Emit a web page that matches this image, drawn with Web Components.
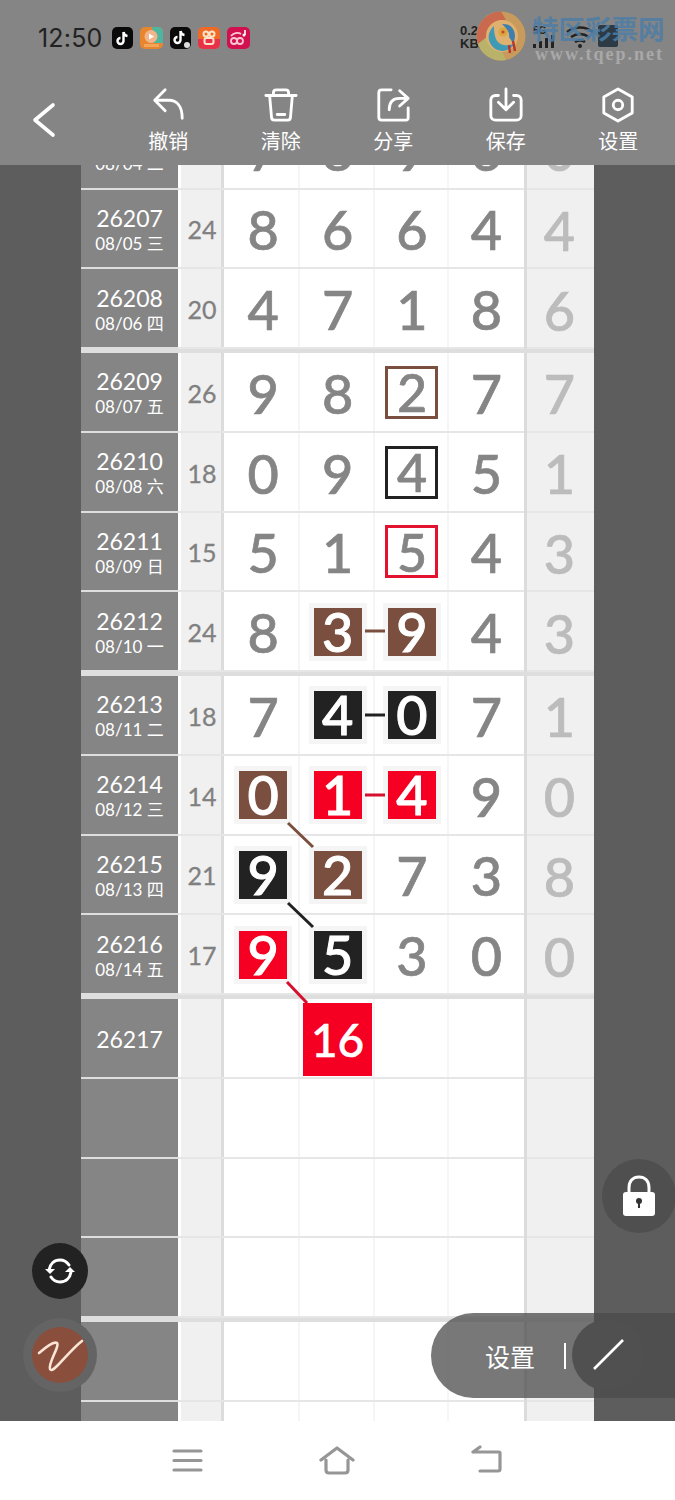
<!DOCTYPE html>
<html lang="zh">
<head>
<meta charset="utf-8">
<title>走势图</title>
<style>
  html, body { margin: 0; padding: 0; background: #5d5d5d; }
  body { font-family: Lato, "Noto Sans CJK SC", sans-serif; }
</style>
</head>
<body>
<trend-page></trend-page>

<script>
const CJK = 'Lato, "Noto Sans CJK SC", sans-serif'

class StatusBar extends HTMLElement {
  constructor() {
    super()
    this.attachShadow({ mode: "open" })
    this.shadowRoot.innerHTML = `
    <style>
      :host { display: flex; align-items: center; height: 76px; padding-left: 38px; position: relative; box-sizing: border-box; }
      .time { font: 400 25px Inter, sans-serif; color: #222; width: 74px; letter-spacing: .2px; }
      .apps { display: flex; gap: 7px; }
      .apps svg { display: block; }
      .net { position: absolute; left: 460px; top: 24px; font: 700 13px/13px "Liberation Sans", sans-serif; color: #222; width: 30px; }
      .mark { position: absolute; left: 476px; top: 10px; }
      .site { position: absolute; left: 532px; top: 12px; font: 700 26.5px/32px "Noto Sans CJK SC", sans-serif; color: #4d7da6; white-space: nowrap; opacity: .85; }
      .url { position: absolute; left: 535px; top: 43px; font: 700 18px/22px "Liberation Serif", serif; color: #a9a9a9; letter-spacing: 2px; white-space: nowrap; }
      .sys { position: absolute; left: 532px; top: 24px; }
    </style>
    <div class="time">12:50</div>
    <div class="apps">
      <svg width="21" height="22" viewBox="0 0 21 22"><rect width="21" height="22" rx="5" fill="#0a0a0a"/><path d="M11.500 5v9a3 3 0 1 1-3-3M11.500 5c.4 2.400 1.800 3.700 4 4" fill="none" stroke="#fff" stroke-width="2.400"/></svg>
      <svg width="23" height="22" viewBox="0 0 23 22"><rect width="23" height="22" rx="5" fill="#e8862f"/><path d="M12 0h6a5 5 0 0 1 5 5v11H14z" fill="#4eb5a0"/><circle cx="11" cy="9.500" r="6.500" fill="#f2b48a"/><path d="M9 6.500l5 3-5 3z" fill="#fff"/><rect x="4" y="17" width="15" height="3" fill="#f3a55a"/></svg>
      <svg width="21" height="22" viewBox="0 0 21 22"><rect width="21" height="22" rx="5" fill="#0a0a0a"/><path d="M10.500 4v9a3 3 0 1 1-3-3M10.500 4c.4 2.400 1.800 3.700 4 4" fill="none" stroke="#fff" stroke-width="2.400"/><circle cx="17" cy="18" r="3" fill="#ddd"/></svg>
      <svg width="22" height="22" viewBox="0 0 22 22"><rect width="22" height="22" rx="5" fill="#ee6a26"/><path d="M0 12h22v5a5 5 0 0 1-5 5H5a5 5 0 0 1-5-5z" fill="#e8324a"/><g fill="none" stroke="#fde3c8" stroke-width="2"><circle cx="8" cy="7" r="2.500"/><circle cx="14" cy="7" r="2.500"/><rect x="6.500" y="11" width="9" height="6" rx="2"/></g></svg>
      <svg width="23" height="22" viewBox="0 0 23 22"><rect width="23" height="22" rx="5" fill="#d20f4f"/><g fill="none" stroke="#fbc6d4" stroke-width="1.800"><circle cx="7" cy="14" r="3"/><circle cx="13" cy="14" r="3"/><path d="M4 9c2-3 7-4 10-2"/></g><path d="M18 3v5" stroke="#fff" stroke-width="1.600"/><circle cx="17" cy="8" r="1.500" fill="#fff"/></svg>
    </div>
    <div class="net">0.21<br>KB/s</div>
    <svg class="sys" width="90" height="30" viewBox="0 0 90 30">
      <text x="1" y="10" font-family="Liberation Sans" font-size="10" font-weight="700" fill="#222">5G</text>
      <g fill="#222"><rect x="1" y="20" width="3" height="4"/><rect x="7" y="17" width="3" height="7"/><rect x="13" y="14" width="3" height="10"/><rect x="19" y="11" width="3" height="13"/></g>
      <g fill="none" stroke="#222" stroke-width="2.600"><path d="M35 8c8-6 18-6 26 0"/><path d="M39 13c6-4 12-4 18 0"/><path d="M43 18c3-2 7-2 10 0"/></g>
      <circle cx="48" cy="22" r="2" fill="#222"/>
      <rect x="66" y="1" width="20" height="22" rx="2" fill="#2b3a44"/>
    </svg>
    <svg class="mark" width="50" height="52" viewBox="0 0 50 52">
      <circle cx="25" cy="26" r="24.500" fill="#c89a5c"/>
      <path d="M25 1.500A24.500 24.500 0 0 0 2 34L12 26C12 15 20 9 30 10z" fill="#c96a4e"/>
      <path d="M2 34A24.500 24.500 0 0 0 30 50L26 41C18 41 13 36 12 26z" fill="#b9b26a"/>
      <circle cx="26" cy="26" r="16" fill="#e0b070"/>
      <path d="M18 16a14 14 0 0 0 8 25c6 0 10-3 13-8-6 4-16 3-19-4-2-5-2-9-2-13z" fill="#3f9bb5"/>
      <path d="M26 14c8-1 13 5 13 12 0 3-1 5-2 7l-4-6c1-5-3-9-7-13z" fill="#3f7fb0"/>
      <circle cx="27" cy="22" r="4.500" fill="#d9a73c"/>
      <circle cx="27" cy="22" r="1.600" fill="#c8453a"/>
      <path d="M37 31l2 10M33 35l1 8" stroke="#b8352e" stroke-width="2.400"/>
    </svg>
    <div class="site">特区彩票网</div>
    <div class="url">www.tqep.net</div>
    `
  }
}

class ToolItem extends HTMLElement {
  constructor() {
    super()
    this.attachShadow({ mode: "open" })
    this.shadowRoot.innerHTML = `
    <style>
      :host { display: flex; flex-direction: column; align-items: center; width: 112.5px; color: #fff; padding-top: 11px; }
      ::slotted(svg) { display: block; width: 36px; height: 36px; }
      .label { font: 400 20px/24px "Noto Sans CJK SC", sans-serif; margin-top: 6px; }
    </style>
    <slot></slot>
    <div class="label">${this.getAttribute("label")}</div>
    `
  }
}

class AppBar extends HTMLElement {
  constructor() {
    super()
    this.attachShadow({ mode: "open" })
    this.shadowRoot.innerHTML = `
    <style>
      :host { display: block; height: 165px; background: #858585; position: relative; z-index: 2; }
      .tools { display: flex; height: 89px; }
      .back { width: 112px; padding: 24px 0 0 30px; box-sizing: border-box; }
      svg { fill: none; stroke: #fff; stroke-width: 3; stroke-linecap: round; stroke-linejoin: round; }
    </style>
    <status-bar></status-bar>
    <div class="tools">
      <div class="back"><svg width="28" height="40" viewBox="0 0 28 40"><path d="M23 5L5 20l18 15" stroke-width="3.600"/></svg></div>
      <tool-item label="撤销"><svg viewBox="0 0 38 38" fill="none" stroke="#fff" stroke-width="3" stroke-linecap="round" stroke-linejoin="round"><path d="M16 3L5 14l11 11M5 14h15c8 0 14 6 14 19"/></svg></tool-item>
      <tool-item label="清除"><svg viewBox="0 0 38 38" fill="none" stroke="#fff" stroke-width="3" stroke-linecap="round" stroke-linejoin="round"><path d="M3 9h32M11 9V6c0-2 1-3 3-3h10c2 0 3 1 3 3v3M7 9l2 23c0 2 1 3 3 3h14c2 0 3-1 3-3l2-23M15 29h8"/></svg></tool-item>
      <tool-item label="分享"><svg viewBox="0 0 38 38" fill="none" stroke="#fff" stroke-width="3" stroke-linecap="round" stroke-linejoin="round"><path d="M17 3H7C5 3 4 4 4 6v26c0 2 1 3 3 3h26c1 0 2-1 2-2V22M26 4l9 8-9 8M35 12h-9c-7 0-11 4-11 12"/></svg></tool-item>
      <tool-item label="保存"><svg viewBox="0 0 38 38" fill="none" stroke="#fff" stroke-width="3" stroke-linecap="round" stroke-linejoin="round"><path d="M11 9H8c-3 0-5 2-5 5v16c0 3 2 5 5 5h22c3 0 5-2 5-5V14c0-3-2-5-5-5h-3M19 2v22M11 16l8 8 8-8"/></svg></tool-item>
      <tool-item label="设置"><svg viewBox="0 0 38 38" fill="none" stroke="#fff" stroke-width="3" stroke-linecap="round" stroke-linejoin="round"><path d="M19 2l15 8.500v17L19 36 4 27.500v-17z"/><circle cx="19" cy="19" r="5"/></svg></tool-item>
    </div>
    `
  }
}

// one draw: issue, date, sum, 4 numbers, tail. marks: brown|black|red filled, o-* outlined, big
class DrawRow extends HTMLElement {
  constructor() {
    super()
    this.attachShadow({ mode: "open" })
  }

  connectedCallback() {
    const issue = this.getAttribute("issue") || ""
    const date = this.getAttribute("date") || ""
    const sum = this.getAttribute("sum") || ""
    const nums = (this.getAttribute("nums") || "").split(",")
    const marks = (this.getAttribute("marks") || "").split(",")
    const tail = this.getAttribute("tail") || ""
    let cells = ""
    for (let i = 0; i < 4; i++) {
      const n = nums[i] || ""
      const m = marks[i] || ""
      cells += `<div class="cell"><span class="${m}">${n}</span></div>`
    }
    this.shadowRoot.innerHTML = `
    <style>
      :host { display: grid; grid-template-columns: 97px 3px 40px 5px repeat(4, 74.4px) 3.400px 1fr; height: 79.75px; box-sizing: border-box; background: #fff; font-family: ${CJK}; }
      .name { background: #858585; color: #fff; display: flex; flex-direction: column; align-items: center; justify-content: center; border-bottom: 2px solid #dedede; box-sizing: border-box; padding-top: 3px; }
      .issue { font-size: 23px; line-height: 27px; }
      .date { font-size: 17px; line-height: 23px; }
      .sum { background: #f0f0f0; color: #808080; font-size: 25px; -webkit-text-stroke: .3px currentColor; display: flex; align-items: center; justify-content: center; border-bottom: 2px solid #e6e6e6; box-sizing: border-box; padding: 2px 0 0 2px; }
      .rule { background: linear-gradient(to right, #dcdcdc 60%, #fff 60%); border-bottom: 2px solid #e6e6e6; box-sizing: border-box; }
      .gap { background: #fff; border-bottom: 2px solid #e6e6e6; box-sizing: border-box; }
      .cell { display: flex; align-items: center; justify-content: center; border-bottom: 2px solid #e6e6e6; box-shadow: inset -2px 0 #f5f5f5; box-sizing: border-box; color: #858585; font-size: 54px; font-weight: 500; -webkit-text-stroke: .7px currentColor; position: relative; padding-top: 4px; }
      .cell span { display: flex; align-items: center; justify-content: center; line-height: 1; }
      .cell:nth-of-type(8) { box-shadow: none; }
      .wall { background: #dcdcdc; }
      .tail { background: #f0f0f0; color: #bcbcbc; font-size: 54px; font-weight: 500; -webkit-text-stroke: .7px currentColor; display: flex; align-items: center; justify-content: center; border-bottom: 2px solid #e6e6e6; box-sizing: border-box; padding: 4px 2px 0 0; }
      .brown, .black, .red { width: 48px; height: 48px; color: #fff; font-weight: 500; -webkit-text-stroke: 1px currentColor; box-shadow: 0 0 0 5px #f5f5f5; margin-top: -3px; }
      .brown { background: #7a4f3f; }
      .black { background: #222; }
      .red { background: #f50023; }
      .big { width: 69px; height: 73px; background: #f50023; color: #fff; font-size: 46px; font-weight: 500; -webkit-text-stroke: .5px currentColor; z-index: 1; margin-top: 0; }
      .o-brown, .o-black, .o-red { width: 53px; height: 53px; box-sizing: border-box; border: 3px solid; margin-top: -3px; font-size: 52px; }
      .o-brown { border-color: #7a4f3f; }
      .o-black { border-color: #222; }
      .o-red { border-color: #e3122f; }
    </style>
    <div class="name"><div class="issue">${issue}</div>${date ? `<div class="date">${date}</div>` : ""}</div>
    <div class="gap"></div>
    <div class="sum">${sum}</div>
    <div class="rule"></div>
    ${cells}
    <div class="wall"></div>
    <div class="tail">${tail}</div>
    `
  }
}

class DrawGroup extends HTMLElement {
  constructor() {
    super()
    this.attachShadow({ mode: "open" })
    this.shadowRoot.innerHTML = `
    <style>
      :host { display: block; border-bottom: 4px solid #dedede; }
    </style>
    <slot></slot>
    `
  }
}

class TrendBoard extends HTMLElement {
  constructor() {
    super()
    this.attachShadow({ mode: "open" })
    this.shadowRoot.innerHTML = `
    <style>
      :host { display: block; flex: 1; min-height: 0; overflow: hidden; background: #5d5d5d; position: relative; }
      .sheet { width: 513px; margin: -55.25px auto 0; }
      .links { position: absolute; left: 0; top: 0; width: 675px; height: 1256px; pointer-events: none; z-index: 1; }
    </style>
    <div class="sheet"><slot></slot></div>
    <svg class="links" viewBox="0 165 675 1256" fill="none" stroke-width="3">
      <path d="M365 631H385" stroke="#7a4f3f"/>
      <path d="M365 715H385" stroke="#222"/>
      <path d="M365 795H385" stroke="#d5102f"/>
      <path d="M288 823L313 847" stroke="#7a4f3f"/>
      <path d="M288 903L313 927" stroke="#222"/>
      <path d="M287 982L307 1003" stroke="#d5102f"/>
    </svg>
    `
  }
}

class FloatTools extends HTMLElement {
  constructor() {
    super()
    this.attachShadow({ mode: "open" })
    this.shadowRoot.innerHTML = `
    <style>
      :host { display: block; position: absolute; inset: 0; z-index: 3; pointer-events: none; }
      .sync, .lock, .pill, .pen-ring, .slash { position: absolute; }
      .sync { left: 32px; top: 1243px; width: 56px; height: 56px; border-radius: 50%; background: #222; display: flex; align-items: center; justify-content: center; }
      .pen-ring { left: 23px; top: 1318px; width: 74px; height: 74px; border-radius: 50%; background: #646464; display: flex; align-items: center; justify-content: center; }
      .pen { width: 56px; height: 56px; border-radius: 50%; background: #8a4f3c; display: flex; align-items: center; justify-content: center; }
      .lock { left: 602px; top: 1159px; width: 74px; height: 74px; border-radius: 50%; background: #4f4f4f; display: flex; align-items: center; justify-content: center; }
      .pill { left: 431px; top: 1313px; width: 244px; height: 85px; box-sizing: border-box; background: rgba(75,75,75,.75); border-radius: 42.5px 0 0 42.5px; display: flex; align-items: center; color: #fff; font: 400 25px "Noto Sans CJK SC", sans-serif; padding-left: 54px; }
      .bar { width: 2px; height: 26px; background: #fff; margin-left: 29px; }
      .slash { left: 572px; top: 1319px; width: 72px; height: 72px; border-radius: 50%; background: #505050; display: flex; align-items: center; justify-content: center; }
    </style>
    <div class="lock"><svg width="36" height="42" viewBox="0 0 36 42"><path d="M8 20V13C8 6 12 2 18 2s10 4 10 11v7" fill="none" stroke="#fff" stroke-width="3"/><rect x="2" y="17" width="32" height="24" rx="3" fill="#fff"/><circle cx="18" cy="26" r="3" fill="#333"/><rect x="17" y="27" width="2" height="6" fill="#333"/></svg></div>
    <div class="sync"><svg width="32" height="32" viewBox="0 0 32 32" fill="none" stroke="#fff" stroke-width="3" stroke-linecap="round"><path d="M5 15C6 9 10 5 16 5c4 0 7 2 9 5M27 17c-1 6-5 10-11 10-4 0-7-2-9-5"/><path d="M1 14l5 5 5-5zM21 17l5-5 5 5z" fill="#fff" stroke="none"/></svg></div>
    <div class="pen-ring"><div class="pen"><svg width="50" height="40" viewBox="0 0 50 40" fill="none" stroke="#fbe3d6" stroke-width="2.600" stroke-linecap="round"><path d="M4 18C10 13 18 6 22 8c3 3-9 20-7 26 1 2 3 1 7-3C30 23 38 13 47 6"/></svg></div></div>
    <div class="pill">设置<div class="bar"></div></div>
    <div class="slash"><svg width="36" height="36" viewBox="0 0 36 36"><path d="M4 32L33 3" stroke="#fff" stroke-width="2.600"/></svg></div>
    `
  }
}

class NavBar extends HTMLElement {
  constructor() {
    super()
    this.attachShadow({ mode: "open" })
    this.shadowRoot.innerHTML = `
    <style>
      :host { display: flex; height: 79px; background: #fff; padding: 24px 172px 0; box-sizing: border-box; justify-content: space-between; align-items: flex-start; }
      svg { display: block; fill: none; stroke: #969696; stroke-width: 3.200; stroke-linecap: round; stroke-linejoin: round; }
    </style>
    <svg width="31" height="28" viewBox="0 0 31 28"><path d="M2 6H29M2 15.500H29M2 25H29"/></svg>
    <svg width="36" height="30" viewBox="0 0 36 30"><path d="M2 15L18 3l16 12M7 15v10c0 2 1 3 3 3h16c2 0 3-1 3-3V15"/></svg>
    <svg width="33" height="30" viewBox="0 0 33 30"><path d="M3 7H29c1 0 1 1 1 1v16c0 2-1 2-2 2H10M10 2L3 7"/></svg>
    `
  }
}

const ROWS = [
  [
    ["26206", "08/04 二", "30", "7,8,9,6", "", "0"],
    ["26207", "08/05 三", "24", "8,6,6,4", "", "4"],
    ["26208", "08/06 四", "20", "4,7,1,8", "", "6"],
  ],
  [
    ["26209", "08/07 五", "26", "9,8,2,7", ",,o-brown,", "7"],
    ["26210", "08/08 六", "18", "0,9,4,5", ",,o-black,", "1"],
    ["26211", "08/09 日", "15", "5,1,5,4", ",,o-red,", "3"],
    ["26212", "08/10 一", "24", "8,3,9,4", ",brown,brown,", "3"],
  ],
  [
    ["26213", "08/11 二", "18", "7,4,0,7", ",black,black,", "1"],
    ["26214", "08/12 三", "14", "0,1,4,9", "brown,red,red,", "0"],
    ["26215", "08/13 四", "21", "9,2,7,3", "black,brown,,", "8"],
    ["26216", "08/14 五", "17", "9,5,3,0", "red,black,,", "0"],
  ],
  [
    ["26217", "", "", ",16,,", ",big,,", ""],
    ["", "", "", ",,,", "", ""],
    ["", "", "", ",,,", "", ""],
    ["", "", "", ",,,", "", ""],
  ],
  [
    ["", "", "", ",,,", "", ""],
    ["", "", "", ",,,", "", ""],
  ],
]

class TrendPage extends HTMLElement {
  constructor() {
    super()
    this.attachShadow({ mode: "open" })
    const groups = ROWS.map(rows => {
      const html = rows.map(r => `<draw-row issue="${r[0]}" date="${r[1]}" sum="${r[2]}" nums="${r[3]}" marks="${r[4]}" tail="${r[5]}"></draw-row>`).join("")
      return `<draw-group>${html}</draw-group>`
    }).join("")
    this.shadowRoot.innerHTML = `
    <style>
      :host { display: flex; flex-direction: column; height: 1500px; width: 675px; position: relative; overflow: hidden; }
    </style>
    <app-bar></app-bar>
    <trend-board>${groups}</trend-board>
    <nav-bar></nav-bar>
    <float-tools></float-tools>
    `
  }
}

customElements.define("status-bar", StatusBar)
customElements.define("tool-item", ToolItem)
customElements.define("app-bar", AppBar)
customElements.define("draw-row", DrawRow)
customElements.define("draw-group", DrawGroup)
customElements.define("trend-board", TrendBoard)
customElements.define("float-tools", FloatTools)
customElements.define("nav-bar", NavBar)
customElements.define("trend-page", TrendPage)
</script>
</body>
</html>
